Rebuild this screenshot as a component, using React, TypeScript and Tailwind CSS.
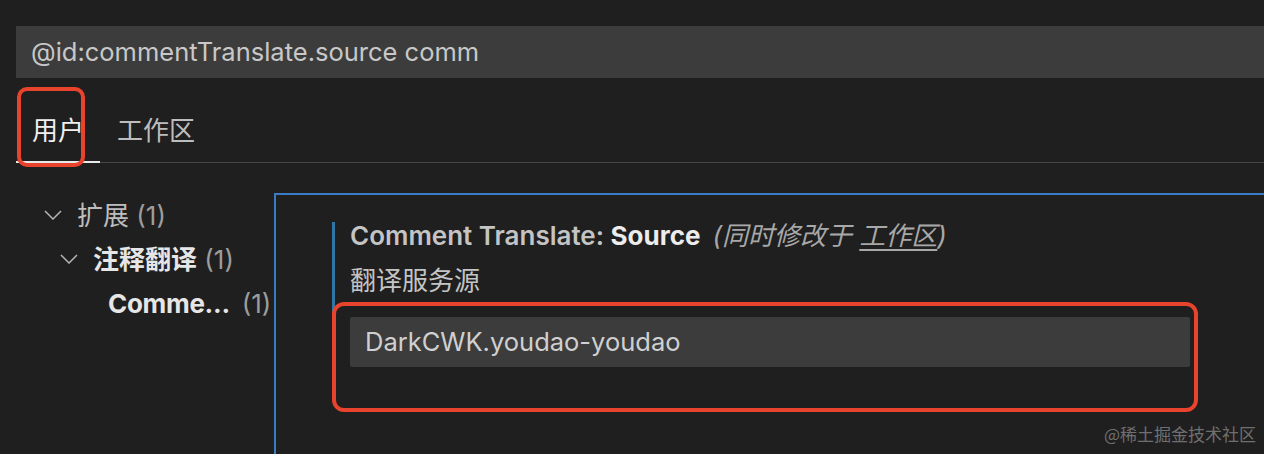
import React from 'react';

const Chevron = () => (
  <svg width="18" height="10" viewBox="0 0 18 10" className="shrink-0">
    <polyline points="1,1 9,9 17,1" fill="none" stroke="#b5b5b5" strokeWidth="1.5" />
  </svg>
);

export default function App() {
  return (
    <div className="relative w-[1264px] h-[454px] overflow-hidden bg-[#1f1f1f] text-[#cccccc] font-['Inter','Noto_Sans_CJK_SC',sans-serif] text-[26px]">
      <div className="pt-[26px] pl-[16px]">
        {/* SEARCH */}
        <div className="h-[52px] bg-[#3c3c3c] flex items-center pl-[15px] text-[25.5px] text-[#c8c8c8]">
          @id:commentTranslate.source comm
        </div>

        {/* TABS */}
        <div className="flex h-[85px] items-end border-b border-[#474747]">
          <div className="relative w-[84px] pl-[16px] pb-[13px] leading-[36px] text-[#f0f0f0]">
            用户
            <div className="absolute left-0 right-0 bottom-[-1px] h-[2px] bg-[#e8e8e8]" />
          </div>
          <div className="pl-[17px] pb-[13px] leading-[36px] text-[#bdbdbd]">工作区</div>
        </div>
      </div>

      {/* BODY */}
      <div className="flex pt-[30px] pl-[16px] h-[291px]">
        <div className="w-[258px] shrink-0">
          <div className="h-[44px] flex items-center pl-[28px] gap-[15px]">
            <Chevron />
            <span className="text-[#bdbdbd]">扩展 <span className="text-[#9d9d9d]">(1)</span></span>
          </div>
          <div className="h-[44px] flex items-center pl-[44px] gap-[15px]">
            <Chevron />
            <span><span className="font-bold text-[#e6e6e6]">注释翻译</span> <span className="text-[#9d9d9d]">(1)</span></span>
          </div>
          <div className="h-[44px] flex items-center pl-[92px] gap-[12px] whitespace-nowrap">
            <span className="font-bold text-[#e6e6e6] tracking-[-0.3px]">Comme...</span>
            <span className="text-[#9d9d9d]">(1)</span>
          </div>
        </div>

        <div className="flex-1 border-l-2 border-t-2 border-[#3a7bc8] pt-[27px] pl-[56px]">
          <div className="border-l-[3px] border-[#2f76a6] pl-[15px] pb-[30px]">
            <div className="leading-[28px] whitespace-nowrap">
              <span className="font-semibold text-[#c4c4c4]">Comment Translate: </span>
              <span className="font-bold text-[#ececec]">Source</span>
              <span className="italic text-[#a8a8a8] ml-[12px]">(同时修改于 <span className="underline underline-offset-4">工作区</span>)</span>
            </div>
            <div className="mt-[16px] leading-[30px] text-[#c4c4c4]">翻译服务源</div>
            <div className="mt-[21px] w-[840px] h-[50px] bg-[#3c3c3c] rounded-[2px] flex items-center pl-[15px] text-[25.5px] text-[#d0d0d0]">
              DarkCWK.youdao-youdao
            </div>
          </div>
        </div>
      </div>

      {/* annotations */}
      <div className="absolute left-[17px] top-[87px] w-[68px] h-[80px] border-4 border-[#e8432c] rounded-[10px]" />
      <div className="absolute left-[332px] top-[302px] w-[866px] h-[110px] border-4 border-[#e8432c] rounded-[12px]" />
      <div className="absolute right-[8px] bottom-[8px] text-[17px] text-[#6f6f6f] font-['Noto_Sans_CJK_SC',serif]">
        @稀土掘金技术社区
      </div>
    </div>
  );
}
